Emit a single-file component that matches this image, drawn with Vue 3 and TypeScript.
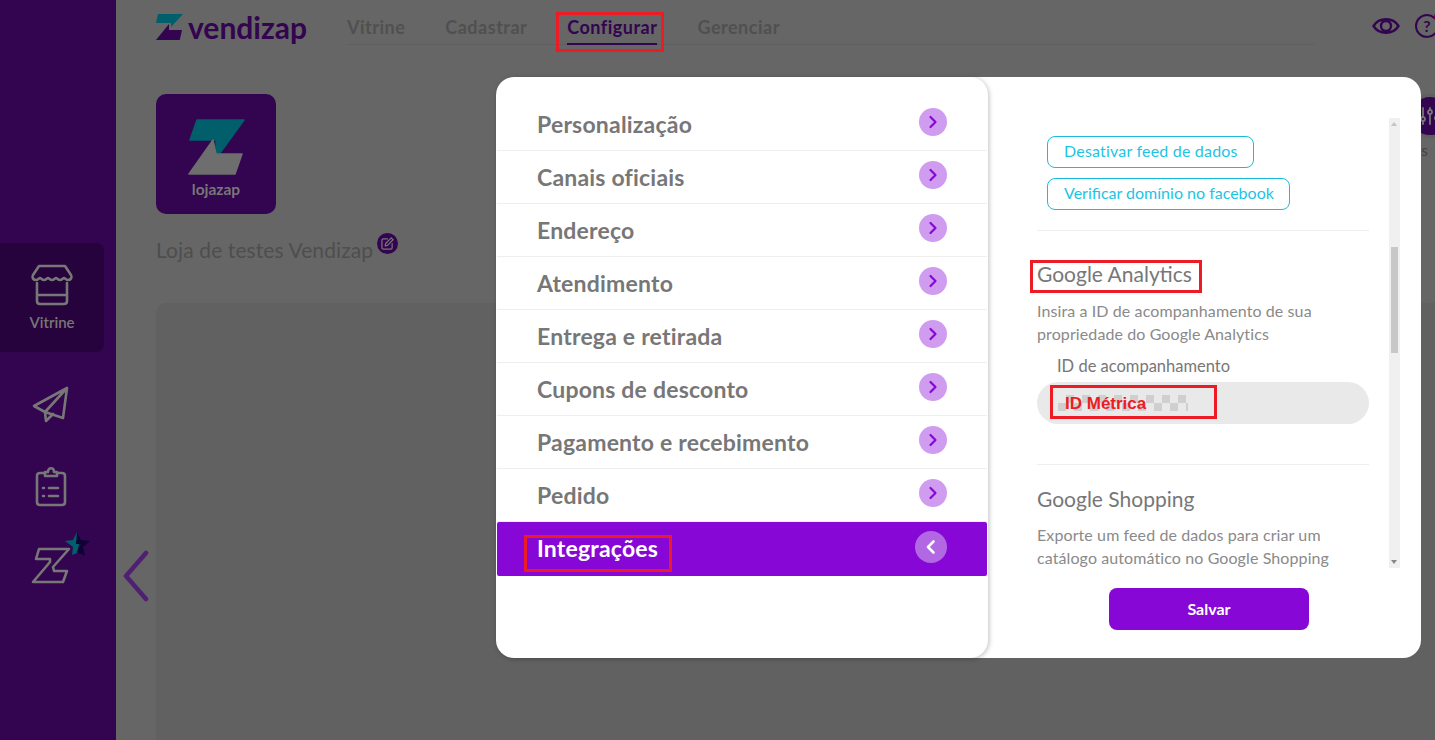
<script setup lang="ts">
const tabs = ['Vitrine', 'Cadastrar', 'Configurar', 'Gerenciar']
const menu = [
  'Personalização',
  'Canais oficiais',
  'Endereço',
  'Atendimento',
  'Entrega e retirada',
  'Cupons de desconto',
  'Pagamento e recebimento',
  'Pedido',
]
</script>

<template>
  <div class="page">
    <aside class="side">
      <div class="side__item side__item--on">
        <svg width="44" height="42" viewBox="0 0 44 42" fill="none" stroke="#777" stroke-width="2.6" stroke-linejoin="round" stroke-linecap="round">
          <path d="M9 2h26l6 9c1.500 3-.5 5-3 5-2 0-3-2-4-2s-2 2-4 2-3-2-4-2-2 2-4 2-3-2-4-2-2 2-4 2-3-2-4-2-2 2-4 2c-2.500 0-4.500-2-3-5z" />
          <path d="M7 19v18c0 2 1 3 3 3h24c2 0 3-1 3-3V19M7 31h30" />
        </svg>
        <span>Vitrine</span>
      </div>
      <svg class="side__icon side__icon--plane" width="38" height="38" viewBox="0 0 38 38" fill="none" stroke="#777" stroke-width="2.6" stroke-linejoin="round" stroke-linecap="round">
        <path d="M35 2 2 20l11 6 18 6zM35 2 13 26l1 9 7-7" />
      </svg>
      <svg class="side__icon side__icon--board" width="32" height="42" viewBox="0 0 32 42" fill="none" stroke="#777" stroke-width="2.6" stroke-linejoin="round" stroke-linecap="round">
        <path d="M10 8H5c-2 0-3 1-3 3v26c0 2 1 3 3 3h22c2 0 3-1 3-3V11c0-2-1-3-3-3h-5" />
        <path d="M10 11V7h3c0-5 6-5 6 0h3v4z" />
        <path d="M14 23h9M14 31h9M8 23h1M8 31h1" />
      </svg>
      <div class="side__pro">
        <svg width="62" height="56" viewBox="0 0 62 56" fill="none">
          <path d="M8 17h30L22 35l1 4h13l-4 11H2l17-20v-3H5z" stroke="#777" stroke-width="2.6" stroke-linejoin="round" />
          <path d="M46 0l3 8-3 13-5 2 1-8-8-6 8-1z" fill="#005f6b" />
          <path d="M46 0l4 8 9 1-7 6 2 9-8-4 4-8h-5z" fill="#0d0336" />
        </svg>
      </div>
    </aside>

    <main class="main">
      <header class="top">
        <div class="brand">
          <svg width="27" height="26" viewBox="0 0 27 26">
            <path d="M2 0h25L15 13v-4H0z" fill="#005f6b" />
            <path d="M13 10v6h13l-2 9c0 .5-.5 1-1 1H0z" fill="#33044f" />
          </svg>
          <span>vendizap</span>
        </div>
        <nav class="tabs">
          <a v-for="t in tabs" :key="t" :class="{ on: t === 'Configurar' }">{{ t }}</a>
        </nav>
        <div class="tools">
          <svg width="28" height="22" viewBox="0 0 28 22" fill="none" stroke="#33044f" stroke-width="2.4">
            <path d="M1.500 11C7 2 21 2 26.500 11 21 20 7 20 1.500 11z" />
            <circle cx="14" cy="11" r="5" />
          </svg>
          <div class="tools__help">?</div>
        </div>
      </header>

      <section class="store">
        <div class="store__logo">
          <svg width="57" height="56" viewBox="0 0 57 56" stroke-width="1.500" stroke-linejoin="round">
            <path d="M9 1h47L32 34h-4V21H2z" fill="#005f6b" stroke="#005f6b" />
            <path d="M25 21l3 14h26l-7 20H1z" fill="#6e6e6e" stroke="#6e6e6e" />
          </svg>
          <span>lojazap</span>
        </div>
        <div class="store__name">
          Loja de testes Vendizap
          <span class="store__edit">
            <svg width="13" height="13" viewBox="0 0 14 14" fill="none" stroke="#777" stroke-width="1.3" stroke-linecap="round" stroke-linejoin="round">
              <path d="M7 2H2.500C1.700 2 1 2.700 1 3.500v8C1 12.300 1.700 13 2.500 13h8c.8 0 1.500-.7 1.500-1.500V7" />
              <path d="M11 1l2 2-6 6-2.500.5L5 7z" />
            </svg>
          </span>
        </div>
      </section>
      <div class="sheet"></div>
    </main>

    <svg class="back" width="28" height="52" viewBox="0 0 28 52" fill="none" stroke="#4f1f72" stroke-width="4.500" stroke-linecap="round" stroke-linejoin="round">
      <path d="M24 3 4 26l20 23" />
    </svg>

    <div class="peek">
      <svg width="22" height="22" viewBox="0 0 22 22" fill="none" stroke="#777" stroke-width="1.800" stroke-linecap="round">
        <path d="M4 3v16M11 3v16M18 3v16" />
        <circle cx="4" cy="14" r="2" fill="#33044f" />
        <circle cx="11" cy="7" r="2" fill="#33044f" />
        <circle cx="18" cy="13" r="2" fill="#33044f" />
      </svg>
    </div>
    <span class="peek-label">s</span>

    <div class="modal">
      <ul class="menu">
        <li v-for="m in menu" :key="m" class="menu__row">
          <span>{{ m }}</span>
          <i class="menu__go">
            <svg width="12" height="14" viewBox="0 0 12 14" fill="none" stroke="#8708d6" stroke-width="2.200" stroke-linecap="round" stroke-linejoin="round">
              <path d="M3.500 2 8.500 7l-5 5" />
            </svg>
          </i>
        </li>
        <li class="menu__row menu__row--on">
          <span>Integrações</span>
          <i class="menu__go">
            <svg width="14" height="16" viewBox="0 0 14 16" fill="none" stroke="#fff" stroke-width="2.600" stroke-linecap="round" stroke-linejoin="round">
              <path d="M9.500 2.500 4 8l5.500 5.500" />
            </svg>
          </i>
        </li>
      </ul>

      <div class="detail">
        <div class="detail__body">
          <div class="scroll">
            <div class="btns">
              <button>Desativar feed de dados</button>
              <button>Verificar domínio no facebook</button>
            </div>
            <h3>Google Analytics</h3>
            <p>Insira a ID de acompanhamento de sua propriedade do Google Analytics</p>
            <label>ID de acompanhamento</label>
            <div class="field"><span class="field__mask"></span></div>
            <h3 class="sep">Google Shopping</h3>
            <p>Exporte um feed de dados para criar um catálogo automático no Google Shopping</p>
          </div>
          <div class="bar"><i class="bar__thumb"></i></div>
        </div>
        <button class="save">Salvar</button>
      </div>
    </div>

    <!-- tutorial marks drawn over the screenshot -->
    <span class="mark mark--tab"></span>
    <span class="mark mark--ga"></span>
    <span class="mark mark--id">ID Métrica</span>
    <span class="mark mark--int"></span>
  </div>
</template>

<style>
html, body { margin: 0; }
</style>

<style scoped>
.page {
  position: relative;
  display: flex;
  width: 1435px;
  height: 740px;
  overflow: hidden;
  background: #666;
  font-family: Lato, sans-serif;
}

.side {
  flex: 0 0 116px;
  display: flex;
  flex-direction: column;
  align-items: flex-start;
  padding-top: 243px;
  box-sizing: border-box;
  background: #33044f;
}
.side__item {
  width: 104px;
  height: 109px;
  padding-top: 21px;
  box-sizing: border-box;
  display: flex;
  flex-direction: column;
  align-items: center;
  gap: 7px;
  border-radius: 0 8px 8px 0;
  color: #777;
  font-size: 15px;
  font-weight: 600;
}
.side__item--on { background: #27033d; }
.side__icon { margin-left: 32px; }
.side__icon--plane { margin-top: 34px; }
.side__icon--board { margin: 41px 0 0 35px; }
.side__pro { margin: 25px 0 0 31px; line-height: 0; }

.main {
  flex: 1;
  min-width: 0;
  padding-left: 40px;
  display: flex;
  flex-direction: column;
}

.top {
  display: flex;
  align-items: flex-start;
  height: 94px;
  box-sizing: border-box;
  padding-top: 13px;
}
.brand {
  flex: none;
  width: 191px;
  display: flex;
  align-items: center;
  gap: 5px;
  height: 27px;
  color: #33044f;
  font-size: 30px;
  font-weight: 700;
}
.tabs {
  flex: none;
  display: flex;
  gap: 40px;
  width: 968px;
  height: 31px;
  border-bottom: 1px solid #5f5f5f;
  font-size: 18px;
  font-weight: 700;
  letter-spacing: .5px;
  color: #505050;
}
.tabs a { height: 31px; padding-top: 3px; box-sizing: border-box; }
.tabs a.on { color: #33044f; border-bottom: 2px solid #33044f; height: 32px; }
.tools {
  flex: none;
  margin-left: 57px;
  display: flex;
  align-items: center;
  gap: 15px;
  height: 26px;
}
.tools__help {
  flex: none;
  width: 20px;
  height: 20px;
  border: 2px solid #33044f;
  border-radius: 50%;
  text-align: center;
  line-height: 20px;
  color: #33044f;
  font-size: 16px;
  font-weight: 700;
  position: relative;
}
.tools__help::after {
  content: '';
  position: absolute;
  top: -3px;
  right: -4px;
  width: 7px;
  height: 7px;
  border-radius: 50%;
  background: #6e0a3e;
}

.store__logo {
  width: 120px;
  height: 120px;
  border-radius: 10px;
  background: #33044f;
  display: flex;
  flex-direction: column;
  align-items: center;
  padding-top: 25px;
  box-sizing: border-box;
  color: #777;
  font-size: 15.500px;
  font-weight: 700;
  gap: 5px;
}
.store__name {
  display: flex;
  align-items: flex-start;
  margin-top: 23px;
  height: 66px;
  color: #4e4e4e;
  font-size: 21px;
  line-height: 26px;
  font-weight: 400;
  letter-spacing: .1px;
}
.store__edit {
  width: 21px;
  height: 21px;
  margin: -4px 0 0 4px;
  border-radius: 50%;
  background: #33044f;
  display: flex;
  align-items: center;
  justify-content: center;
}
.sheet {
  flex: 1;
  width: 1300px;
  border-radius: 10px 0 0 0;
  background: #616161;
}

.back { position: absolute; left: 122px; top: 550px; }
.peek {
  position: absolute;
  left: 1408px;
  top: 94px;
  width: 38px;
  height: 38px;
  border: 3px solid #5f5f5f;
  border-radius: 50%;
  background: #33044f;
  display: flex;
  align-items: center;
  justify-content: center;
}
.peek-label {
  position: absolute;
  left: 1421px;
  top: 140px;
  color: #444;
  font-size: 16px;
}

.modal {
  position: absolute;
  left: 496px;
  top: 77px;
  width: 925px;
  height: 581px;
  display: flex;
  border-radius: 18px;
  background: #fff;
}

.menu {
  flex: 0 0 492px;
  margin: 0;
  padding: 21px 0 0;
  box-sizing: border-box;
  list-style: none;
  border-radius: 18px;
  box-shadow: 1px 1px 5px rgba(0, 0, 0, .25);
}
.menu__row {
  height: 53px;
  margin: 0 1px;
  padding: 0 40px 0 40px;
  box-sizing: border-box;
  display: flex;
  align-items: center;
  justify-content: space-between;
  border-bottom: 1px solid #eee;
  color: #777;
  font-size: 23px;
  font-weight: 700;
  letter-spacing: .2px;
}
.menu__row > span { margin-top: -1px; }
.menu__go {
  width: 28px;
  height: 28px;
  margin-top: -5px;
  border-radius: 50%;
  background: #d09cf0;
  display: flex;
  align-items: center;
  justify-content: center;
}
.menu__row--on {
  height: 54px;
  border: 0;
  border-radius: 2px;
  background: #8708d6;
  color: #fff;
}
.menu__row--on > span { margin-top: -3px; }
.menu__row--on .menu__go {
  width: 32px;
  height: 32px;
  background: #b168e2;
}

.detail {
  flex: 1;
  padding: 41px 21px 0 49px;
  display: flex;
  flex-direction: column;
}
.detail__body {
  display: flex;
  height: 450px;
}
.scroll {
  width: 332px;
  height: 450px;
  overflow: hidden;
  color: #8a8a8a;
}
.btns {
  padding: 18px 0 20px 10px;
  display: flex;
  flex-direction: column;
  align-items: flex-start;
  gap: 10px;
  border-bottom: 1px solid #eee;
}
.btns button {
  height: 32px;
  padding: 0 15px 3px 16px;
  border: 1px solid #18bcdc;
  border-radius: 8px;
  background: #fff;
  color: #1cc4e4;
  font: 400 16px Lato, sans-serif;
  letter-spacing: .2px;
}
.btns button + button { letter-spacing: 0; }
.scroll h3 {
  margin: 30px 0 0;
  color: #777;
  font-size: 21px;
  line-height: 26px;
  font-weight: 400;
}
.scroll h3.sep {
  margin-top: 0;
  padding-top: 21px;
  border-top: 1px solid #eee;
}
.scroll p {
  margin: 12px 0 0;
  font-size: 16px;
  line-height: 23px;
  letter-spacing: .1px;
}
.scroll h3.sep + p { margin-top: 11px; }
.scroll label {
  display: block;
  margin: 10px 0 5px 20px;
  color: #777;
  font-size: 16.500px;
  line-height: 22px;
}
.field {
  height: 42px;
  margin-bottom: 40px;
  border-radius: 21px;
  background: #e9e9e9;
  display: flex;
  align-items: center;
  padding-left: 21px;
}
.field__mask {
  width: 130px;
  height: 16px;
  background: repeating-conic-gradient(#cfcfcf 0 25%, #e9e9e9 0 50%) 0 0 / 16px 16px;
}
.bar {
  position: relative;
  width: 11px;
  margin-left: 20px;
  background: #f0f0f0;
}
.bar::before {
  content: '';
  position: absolute;
  left: 2px;
  top: 4px;
  border: 3px solid transparent;
  border-top: 0;
  border-bottom: 4px solid #c4c4c4;
}
.bar::after {
  content: '';
  position: absolute;
  left: 2px;
  bottom: 4px;
  border: 3px solid transparent;
  border-bottom: 0;
  border-top: 4px solid #888;
}
.bar__thumb {
  position: absolute;
  left: 2px;
  top: 129px;
  width: 7px;
  height: 106px;
  background: #c8c8c8;
}
.save {
  align-self: flex-start;
  width: 200px;
  height: 42px;
  margin: 20px 0 0 72px;
  padding-bottom: 2px;
  border: 0;
  border-radius: 8px;
  background: #8708d6;
  color: #fff;
  font: 700 16px Lato, sans-serif;
}

.mark {
  position: absolute;
  box-sizing: border-box;
  border: 3px solid #ed1c24;
}
.mark--tab { left: 556px; top: 12px; width: 108px; height: 40px; }
.mark--ga { left: 1030px; top: 260px; width: 172px; height: 33px; }
.mark--int { left: 524px; top: 535px; width: 148px; height: 37px; }
.mark--id {
  left: 1050px;
  top: 385px;
  width: 167px;
  height: 34px;
  padding-left: 12px;
  color: #ed1c24;
  font: 700 17px/31px "Liberation Sans", sans-serif;
}
</style>
